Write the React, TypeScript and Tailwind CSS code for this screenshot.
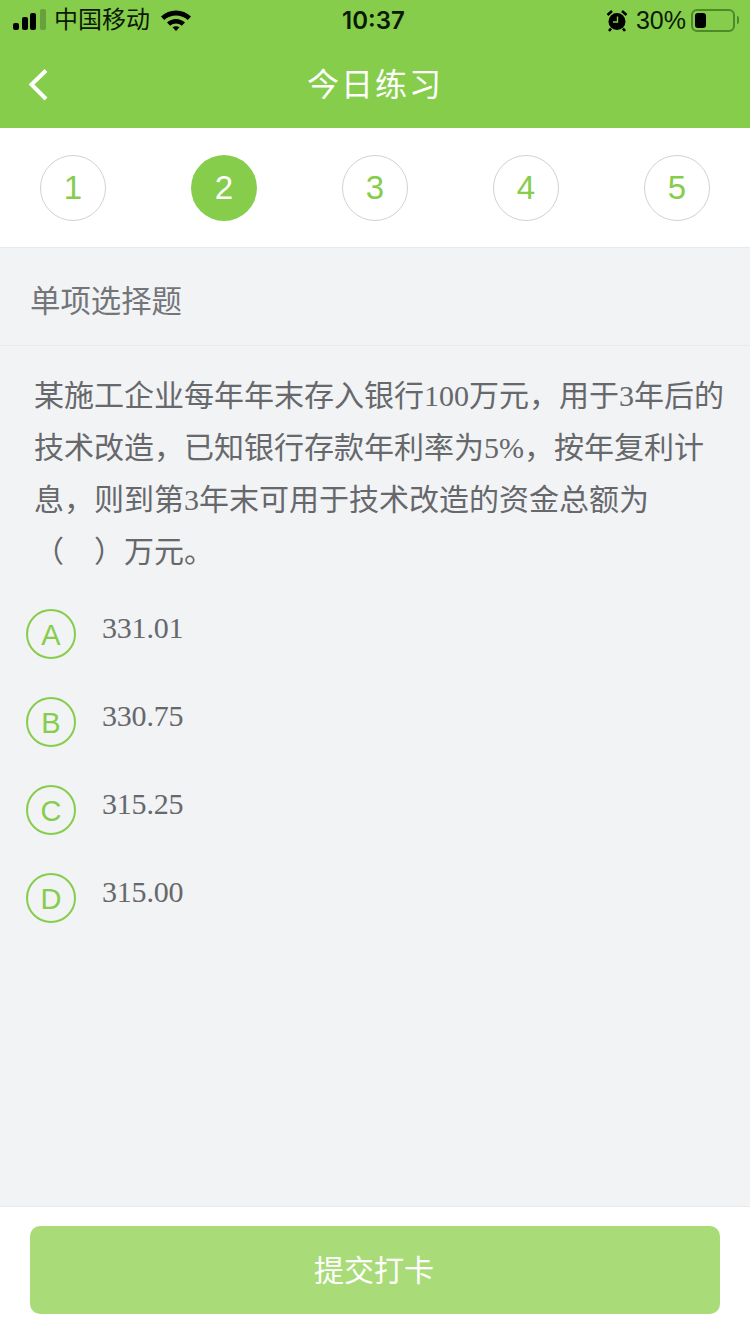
const sans = "font-['Liberation_Sans','Noto_Sans_CJK_SC',sans-serif]";
const serif = "font-['Liberation_Serif','Noto_Sans_CJK_SC',serif]";

const steps = [1, 2, 3, 4, 5];
const options = [
  { key: "A", text: "331.01" },
  { key: "B", text: "330.75" },
  { key: "C", text: "315.25" },
  { key: "D", text: "315.00" },
];

function StatusBar() {
  return (
    <div className="relative flex h-[40px] items-center justify-between pl-[13px] pr-[15px] text-[#0b1a05]">
      <div className="flex items-center">
        <svg width="34" height="24" viewBox="0 0 34 24" className="mr-[8px]">
          <rect x="0" y="15" width="6" height="7" rx="2" fill="#000" />
          <rect x="9" y="9" width="6" height="13" rx="2" fill="#000" />
          <rect x="17" y="5" width="6" height="17" rx="2" fill="#000" />
          <rect x="27" y="1" width="6" height="21" rx="2" fill="#000" fillOpacity="0.22" />
        </svg>
        <span className="-ml-[1px] text-[24px] leading-none">中国移动</span>
        <svg width="30" height="22" viewBox="0 0 30 22" className="ml-[11px]">
          <path d="M0 7.500C8 -.5 22 -.5 30 7.500L26.800 11C20.500 5 9.500 5 3.200 11Z" fill="#000" />
          <path d="M6 13.500C11 8.800 19 8.800 24 13.500L20.800 16.800C17.300 13.700 12.700 13.700 9.200 16.800Z" fill="#000" />
          <path d="M11.500 18.300C13.600 16.800 16.400 16.800 18.500 18.300L15 22Z" fill="#000" />
        </svg>
      </div>
      <span className="absolute left-[342px] top-[8px] font-['Inter',sans-serif] text-[24px] font-semibold leading-[26px]">10:37</span>
      <div className="flex items-center">
        <svg width="22" height="23" viewBox="0 0 22 23">
          <circle cx="11" cy="12.500" r="8.500" fill="#000" />
          <path d="M1.500 6 6 2M20.500 6 16 2M5 19.500 3 22M17 19.500 19 22" stroke="#000" strokeWidth="2.600" />
          <path d="M11.500 7.500V13H7" fill="none" stroke="#86cd4c" strokeWidth="1.400" />
        </svg>
        <span className="ml-[8px] text-[25px] leading-none">30%</span>
        <div className="relative ml-[5px] flex h-[23px] w-[44px] items-center rounded-[6px] border-2 border-[#4f8a28] p-[2px]">
          <div className="h-[15px] w-[11px] rounded-[3px] bg-black" />
          <div className="absolute -right-[6px] top-[5px] h-[8px] w-[2px] rounded-r-full bg-[#4f8a28]" />
        </div>
      </div>
    </div>
  );
}

function NavBar() {
  return (
    <div className="relative flex h-[88px] items-start justify-center pt-[24px]">
      <svg width="24" height="36" viewBox="0 0 24 36" className="absolute left-[27px] top-[27px]">
        <path d="M19 3.500 4.500 17.500 19 32" fill="none" stroke="#fff" strokeWidth="4" />
      </svg>
      <h1 className="text-[32px] font-normal leading-[42px] tracking-[2px] text-white">今日练习</h1>
    </div>
  );
}

function StepRow() {
  return (
    <div className="flex h-[120px] items-center justify-between border-b border-[#e8e9ea] bg-white px-[40px]">
      {steps.map((step) => (
        <div
          key={step}
          className={`flex h-[66px] w-[66px] items-center justify-center rounded-full text-[33px] ${
            step === 2 ? "bg-[#86cd4c] text-white" : "border border-[#d0d2d2] text-[#86cd4c]"
          }`}
        >
          {step}
        </div>
      ))}
    </div>
  );
}

export default function App() {
  return (
    <div className={`flex h-[1334px] w-[750px] flex-col overflow-hidden bg-[#f2f3f5] ${sans}`}>
      <header className="bg-[#86cd4c]">
        <StatusBar />
        <NavBar />
      </header>
      <StepRow />

      <div className="flex h-[98px] items-center border-b border-[#e8e9ea] pl-[30px] pt-[10px] text-[30.400px] text-[#737578]">
        单项选择题
      </div>

      <main className={`flex-1 ${serif}`}>
        <p className="pl-[34px] pr-[15px] pt-[24px] text-[30px] leading-[52px] text-[#66686b]">
          某施工企业每年年末存入银行100万元，用于3年后的技术改造，已知银行存款年利率为5%，按年复利计息，则到第3年末可用于技术改造的资金总额为
          <br />
          （&nbsp;&nbsp;&nbsp;&nbsp;）万元。
        </p>
        <div className="mt-[31px] flex flex-col gap-[38px] pl-[26px]">
          {options.map((option) => (
            <div key={option.key} className="flex items-start">
              <div className={`flex h-[50px] w-[50px] items-center justify-center rounded-full border-2 border-[#86cd4c] pt-[3px] text-[29px] text-[#86cd4c] ${sans}`}>
                {option.key}
              </div>
              <span className="ml-[26px] -mt-[3px] text-[30px] leading-[44px] tracking-[-0.2px] text-[#66686b]">{option.text}</span>
            </div>
          ))}
        </div>
      </main>

      <footer className="flex h-[128px] items-start border-t border-[#e8e9ea] bg-white px-[30px] pt-[19px]">
        <button
          type="button"
          className="h-[88px] w-full rounded-[10px] bg-[#a9dc79] pr-[2px] text-[30px] text-white"
        >
          提交打卡
        </button>
      </footer>
    </div>
  );
}
